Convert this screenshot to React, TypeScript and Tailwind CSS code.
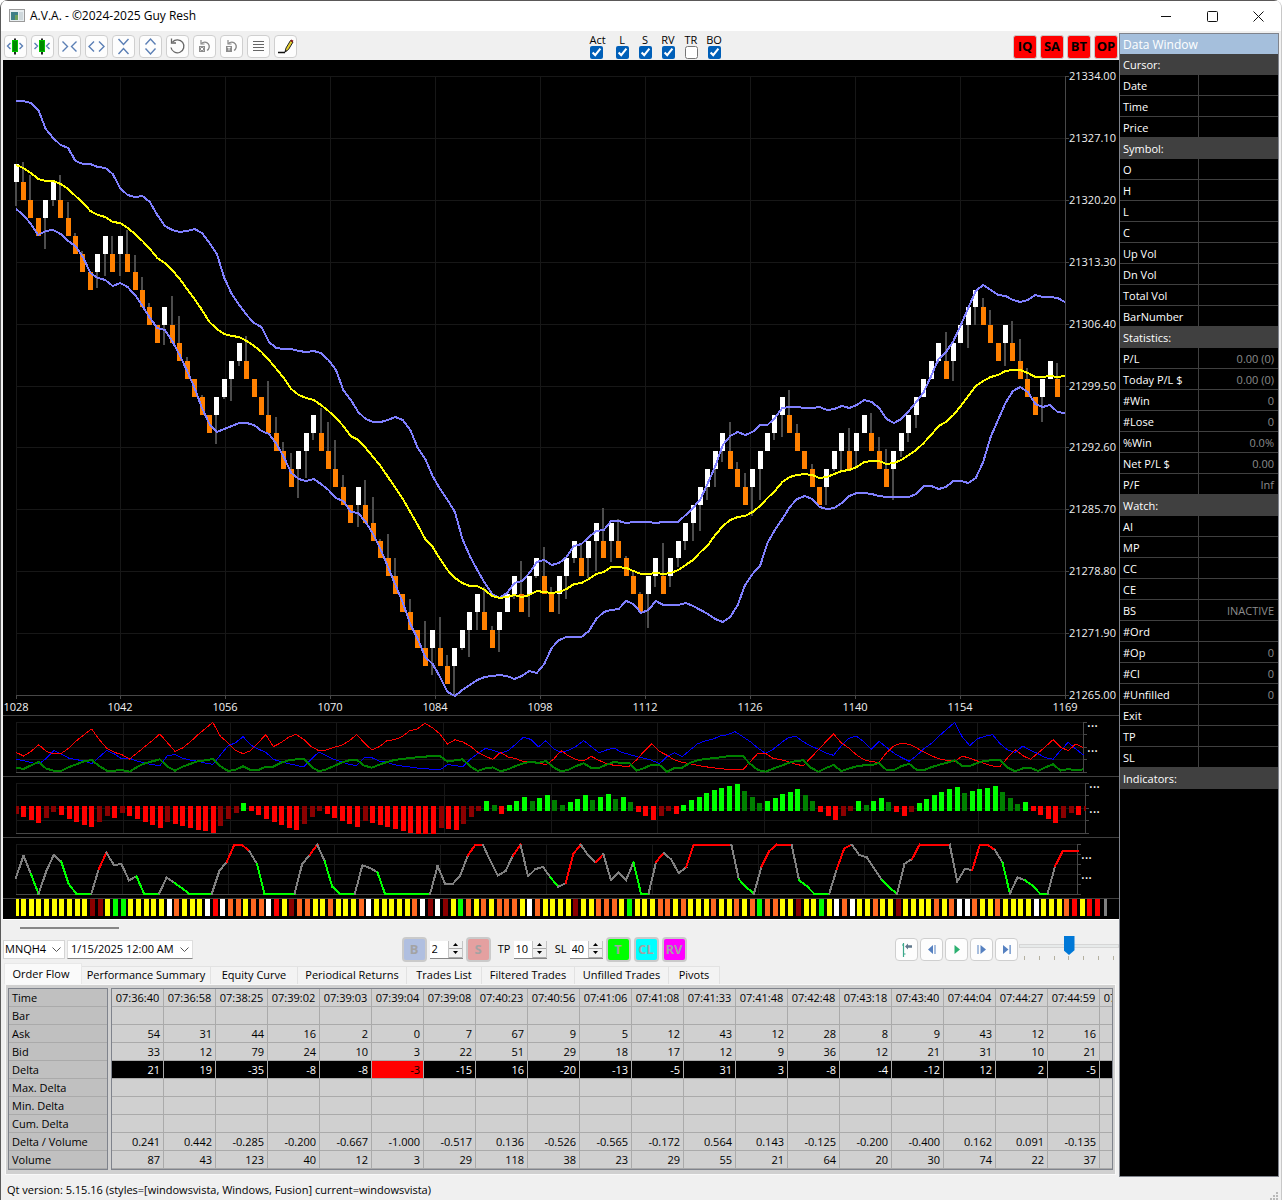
import React from 'react';

// One token per bar: direction (U/D) and wick length in px.
const BARS = `
U24 D20 D25 D0 U31 U6 D25 D16 D3 D3 D0 U16 U22 D18 U22 D24 D17 D13 D4 D0
U20 D29 D27 D4 D0 D2 D0 U29 U2 U22 U5 D25 D0 D0 D34 D16 D9 D16 U29 U27
U7 D25 D29 D29 D12 D0 U22 D25 D26 D2 D24 D18 D0 D13 D0 D27 U27 D31 D11 U29
U2 U27 U18 D25 D4 U22 U0 U5 D33 U23 U2 D29 D7 U20 U23 U5 D14 U20 U30 D33
U21 D22 D2 D5 D2 U34 U11 D33 U11 U9 U9 U18 U26 U13 U18 U11 D29 D7 D14 U29
U31 U0 U7 U22 D25 D9 D0 D5 D0 U18 U2 U19 D23 U15 U0 D20 D14 D20 U31 U6
U9 U13 U0 U0 U2 D29 U20 U0 U23 U18 D9 D15 D0 U23 D22 D22 D11 D0 U25 U0 D16`
    .trim()
    .split(/\s+/);

const UPPER = [
    101, 101, 103, 110, 129, 138, 145, 148, 161, 164,
    164, 167, 168, 174, 188, 195, 197, 196, 202, 215,
    226, 230, 232, 231, 229, 233, 243, 254, 278, 294,
    305, 315, 323, 327, 342, 348, 349, 349, 351, 352,
    351, 353, 360, 370, 390, 400, 412, 419, 422, 422,
    420, 417, 420, 430, 448, 459, 476, 489, 500, 512,
    539, 556, 570, 583, 594, 598, 593, 583, 581, 573,
    562, 560, 565, 563, 557, 546, 544, 537, 531, 530,
    521, 521, 523, 522, 522, 522, 523, 522, 522, 522,
    515, 508, 499, 483, 466, 445, 436, 432, 435, 432,
    425, 425, 418, 408, 407, 407, 408, 408, 407, 410,
    409, 406, 408, 405, 400, 402, 408, 419, 423, 419,
    411, 402, 392, 376, 359, 352, 341, 325, 308, 291,
    285, 290, 295, 296, 300, 302, 300, 295, 297, 297,
    298, 302,
];

const MIDDLE = [
    165, 168, 173, 179, 181, 181, 184, 189, 196, 203,
    211, 215, 217, 222, 223, 228, 234, 241, 249, 258,
    263, 270, 279, 289, 299, 310, 322, 329, 334, 336,
    337, 341, 346, 352, 360, 369, 378, 389, 395, 398,
    400, 405, 411, 418, 426, 436, 440, 448, 457, 466,
    477, 488, 499, 512, 525, 539, 547, 559, 570, 578,
    583, 586, 586, 590, 596, 598, 597, 595, 597, 595,
    591, 592, 593, 592, 589, 584, 583, 579, 574, 572,
    567, 567, 568, 571, 574, 574, 573, 574, 573, 570,
    565, 560, 552, 545, 535, 526, 520, 517, 516, 512,
    506, 498, 491, 482, 477, 475, 474, 475, 478, 477,
    474, 471, 470, 467, 462, 461, 461, 464, 463, 460,
    455, 450, 443, 435, 426, 422, 415, 406, 396, 386,
    381, 377, 375, 371, 370, 370, 373, 377, 377, 376,
    377, 376,
];

const LOWER = [
    209, 215, 224, 235, 231, 230, 234, 241, 246, 257,
    273, 278, 280, 286, 283, 287, 295, 306, 318, 328,
    330, 341, 355, 371, 388, 408, 424, 432, 429, 426,
    423, 423, 425, 431, 434, 444, 457, 473, 479, 481,
    479, 484, 490, 498, 501, 512, 513, 522, 534, 549,
    567, 585, 603, 624, 639, 657, 664, 677, 692, 696,
    690, 685, 680, 677, 676, 675, 676, 679, 676, 671,
    673, 664, 648, 640, 637, 637, 637, 631, 619, 612,
    610, 609, 601, 604, 613, 610, 601, 605, 605, 605,
    603, 606, 610, 614, 619, 622, 617, 605, 585, 574,
    566, 543, 530, 519, 507, 499, 496, 499, 507, 509,
    508, 503, 496, 493, 493, 494, 496, 497, 497, 497,
    497, 494, 486, 486, 489, 487, 481, 481, 483, 478,
    462, 437, 420, 403, 391, 387, 392, 404, 407, 405,
    412, 413,
];

// Oscillator series are stored in thirds of a pixel, measured from y = 690.
const DI_MINUS = [
    187, 198, 184, 164, 184, 192, 190, 174, 152, 134,
    117, 149, 175, 187, 194, 207, 189, 170, 152, 132,
    158, 184, 174, 156, 135, 116, 97, 139, 158, 181,
    191, 182, 158, 134, 170, 158, 142, 133, 148, 170,
    182, 180, 172, 166, 153, 134, 158, 180, 170, 152,
    149, 140, 122, 117, 100, 113, 132, 162, 149, 156,
    168, 187, 199, 208, 187, 201, 206, 214, 217, 219,
    224, 208, 182, 198, 209, 213, 199, 211, 221, 226,
    228, 229, 209, 183, 161, 184, 196, 210, 217, 221,
    226, 230, 233, 236, 238, 239, 240, 215, 190, 190,
    205, 209, 215, 223, 227, 203, 179, 155, 132, 158,
    174, 194, 209, 215, 217, 188, 167, 159, 163, 174,
    187, 198, 207, 211, 215, 198, 205, 213, 221, 228,
    229, 203, 179, 197, 208, 189, 170, 149, 172, 182,
    162, 173,
];

const DI_PLUS = [
    208, 212, 218, 222, 205, 182, 192, 205, 209, 213,
    221, 201, 181, 192, 207, 205, 213, 219, 224, 227,
    197, 194, 205, 210, 214, 219, 223, 195, 168, 158,
    140, 165, 177, 187, 208, 215, 221, 226, 231, 208,
    186, 197, 208, 216, 223, 227, 203, 203, 213, 217,
    224, 228, 231, 234, 236, 238, 240, 224, 226, 231,
    208, 191, 175, 181, 189, 182, 163, 142, 148, 171,
    152, 176, 187, 181, 169, 152, 170, 188, 180, 174,
    187, 193, 200, 205, 211, 221, 200, 188, 200, 181,
    162, 153, 148, 138, 134, 125, 140, 155, 174, 190,
    178, 160, 143, 139, 155, 168, 178, 189, 196, 168,
    145, 138, 155, 178, 154, 172, 190, 203, 214, 196,
    175, 159, 137, 117, 97, 141, 167, 146, 139, 134,
    161, 180, 187, 168, 181, 191, 203, 208, 181, 157,
    177, 195,
];

const ADX = [
    233, 237, 226, 216, 236, 242, 242, 231, 223, 214,
    210, 228, 242, 242, 240, 245, 231, 220, 214, 208,
    230, 242, 230, 222, 214, 211, 207, 228, 243, 239,
    229, 240, 240, 230, 230, 218, 211, 208, 206, 230,
    244, 238, 228, 218, 211, 209, 227, 233, 224, 216,
    210, 207, 204, 202, 200, 198, 198, 215, 211, 208,
    229, 243, 235, 232, 244, 238, 228, 220, 215, 219,
    213, 232, 244, 239, 228, 220, 234, 234, 224, 216,
    219, 218, 242, 234, 224, 225, 245, 234, 233, 219,
    211, 207, 205, 202, 199, 198, 198, 222, 240, 245,
    236, 228, 219, 213, 211, 233, 245, 234, 225, 243,
    236, 229, 226, 226, 219, 240, 240, 228, 222, 240,
    240, 231, 224, 218, 211, 228, 228, 219, 212, 211,
    211, 233, 244, 235, 233, 243, 232, 223, 242, 237,
    241, 238,
];

const HISTOGRAM = [
    372, 381, 390, 399, 384, 366, 375, 387, 396, 405,
    411, 396, 378, 384, 369, 378, 387, 396, 405, 414,
    396, 402, 408, 414, 420, 423, 429, 408, 387, 369,
    339, 363, 375, 387, 396, 405, 414, 420, 402, 381,
    363, 372, 384, 393, 402, 411, 393, 399, 405, 411,
    417, 423, 429, 432, 432, 432, 414, 417, 420, 402,
    381, 363, 333, 345, 372, 345, 333, 321, 333, 324,
    315, 330, 345, 336, 327, 315, 330, 321, 312, 327,
    321, 336, 366, 378, 390, 378, 363, 372, 345, 330,
    321, 309, 300, 294, 288, 282, 303, 321, 339, 333,
    324, 312, 306, 297, 315, 333, 366, 378, 390, 378,
    363, 333, 345, 333, 324, 336, 366, 378, 366, 339,
    327, 315, 306, 297, 291, 309, 303, 297, 294, 288,
    306, 324, 342, 336, 363, 375, 387, 399, 384, 369,
    375, 363,
];

// Letter is the colour of the segment that starts at the point.
const STOCHASTIC = `
g563 g497 L553 g612 g545 g495 L515 L582 L611 L611
g611 R537 g488 g525 g522 g571 L559 L611 L611 g611
g563 L578 L594 L611 L611 L611 g611 g543 R515 R464
R464 g484 L522 L611 L611 L611 L611 g611 g522 R495
g464 L514 L590 L611 L611 g611 g526 g534 L547 L611
L611 L611 L611 L611 L611 g611 g528 g582 g582 g556
R497 R464 g464 g513 g557 g543 R497 g464 g559 g537
g531 L563 g590 R580 R492 g464 g497 R517 g492 g570
g547 g571 L517 L611 g611 R516 g489 g508 g549 R532
R464 R464 R464 R464 R464 g464 L568 L592 g611 R530
R484 R464 R464 g464 L571 L588 L611 L611 g611 R537
R475 g464 g495 g502 g537 L571 L593 g611 g521 R507
R464 R464 R464 R464 g464 g575 g537 R540 R464 R464
g480 L517 g611 g562 L571 L587 L611 g611 R528 R484
R482 R482`
    .trim()
    .split(/\s+/);

const STRIP =
    'YYYYYYYYYYDDYGGYYYYYWOYYYWRWOOYOOWRYDOOYYOYYYOWYYY' +
    'YYOWDWDYGOYOYOOOYWOYYYYDYYOOOYGYYYOOYOYYYOYYOYOGOO' +
    'YYDYYGYWOWYYOYYDYYYYOYOWWOYYOYYYYWYYYORYRR';

const STRIP_COLORS: Record<string, string> = {
    Y: '#ffff00',
    D: '#8b0000',
    G: '#00ff00',
    W: '#ffffff',
    O: '#ff6820',
    R: '#ff0000',
};

const SEGMENT_COLORS: Record<string, string> = { g: '#808080', L: '#00ff00', R: '#ff0000' };

const PRICES = ['21334.00', '21327.10', '21320.20', '21313.30', '21306.40', '21299.50', '21292.60', '21285.70', '21278.80', '21271.90', '21265.00'];
const BAR_NUMBERS = ['1028', '1042', '1056', '1070', '1084', '1098', '1112', '1126', '1140', '1154', '1169'];

const GRID = '#171717';
const AXIS = '#484848';

const toPoints = (values: number[], step: number) =>
    values.map((v, i) => `${16 + i * step},${v}`).join(' ');

const oscPoints = (values: number[]) =>
    values.map((v, i) => `${16 + i * 7.57},${690 + v / 3}`).join(' ');

const PriceChart: React.FC = () => {
    let level = -1;
    const candles = BARS.map((token) => {
        const up = token[0] === 'U';
        level += up ? -1 : 1;
        return { up, level, wick: Number(token.slice(1)) };
    });
    // the first bar sits on level 0
    const shift = -candles[0].level;

    return (
        <svg viewBox="3 60 1116 655" className="block w-full" role="img" aria-label="Price chart">
            <g shapeRendering="crispEdges">
                {PRICES.map((p, i) => {
                    const y = Math.round(76 + i * 61.9);
                    return (
                        <g key={p}>
                            <rect x={16} y={y} width={1049} height={1} fill={i === 10 ? AXIS : GRID} />
                            <rect x={1065} y={y} width={4} height={1} fill={AXIS} />
                        </g>
                    );
                })}
                {BAR_NUMBERS.map((n, i) => {
                    const x = i === 0 ? 16 : 15 + i * 105;
                    return (
                        <g key={n}>
                            <rect x={x} y={76} width={1} height={619} fill={i === 10 ? AXIS : GRID} />
                            <rect x={x} y={695} width={1} height={4} fill={AXIS} />
                        </g>
                    );
                })}
                {candles.map((c, i) => {
                    const x = Math.floor(16 + i * 7.44);
                    const top = Math.round(164 + (c.level + shift) * 17.93);
                    const bottom = Math.round(164 + (c.level + shift + 1) * 17.93);
                    return (
                        <g key={i}>
                            <rect x={x - 1} y={c.up ? bottom : top - c.wick} width={2} height={c.wick} fill="#4c4c4c" />
                            <rect x={x - 2} y={top} width={5} height={bottom - top} fill={c.up ? '#ffffff' : '#ff8000'} />
                        </g>
                    );
                })}
                <polyline points={toPoints(UPPER, 7.44)} fill="none" stroke="#8080ff" strokeWidth={2} />
                <polyline points={toPoints(LOWER, 7.44)} fill="none" stroke="#8080ff" strokeWidth={2} />
                <polyline points={toPoints(MIDDLE, 7.44)} fill="none" stroke="#ffff00" strokeWidth={2} />
            </g>
            <g fill="#f0f0f0" fontSize={11}>
                {PRICES.map((p, i) => (
                    <text key={p} x={1069} y={Math.round(80 + i * 61.9)}>{p}</text>
                ))}
                {BAR_NUMBERS.map((n, i) => (
                    <text key={n} x={i === 0 ? 16 : 15 + i * 105} y={711} textAnchor="middle">{n}</text>
                ))}
            </g>
        </svg>
    );
};

interface PanelGridProps {
    top: number;
    lines: number[];
    step: number;
    right: number;
    dots: number[];
}

const PanelGrid: React.FC<PanelGridProps> = ({ top, lines, step, right, dots }) => (
    <>
        <g shapeRendering="crispEdges">
            {lines.map((y, i) => (
                <g key={y}>
                    <rect x={16} y={top + y} width={right - 16} height={1} fill={i === lines.length - 1 ? AXIS : GRID} />
                    <rect x={right} y={top + y} width={4} height={1} fill={AXIS} />
                </g>
            ))}
            {Array.from({ length: 10 }, (_, i) => (
                <rect key={i} x={Math.round(16 + i * step)} y={top} width={1} height={50} fill={GRID} />
            ))}
            <rect x={right} y={top} width={1} height={50} fill={AXIS} />
        </g>
        <g fill="#ffffff" fontSize={14}>
            {dots.map((y) => (
                <text key={y} x={right + 4} y={y}>...</text>
            ))}
        </g>
    </>
);

const DirectionalPanel: React.FC = () => (
    <svg viewBox="3 716 1116 60" className="block w-full overflow-visible" role="img" aria-label="Directional movement">
        <PanelGrid top={722} lines={[0, 12, 25, 37, 50]} step={106.8} right={1083} dots={[727, 752]} />
        <g fill="none" shapeRendering="crispEdges">
            <polyline points={oscPoints(DI_PLUS)} stroke="#0000ff" />
            <polyline points={oscPoints(DI_MINUS)} stroke="#ff0000" />
            <polyline points={oscPoints(ADX)} stroke="#008000" strokeWidth={2} />
        </g>
    </svg>
);

const HistogramPanel: React.FC = () => (
    <svg viewBox="3 777 1116 60" className="block w-full overflow-visible" role="img" aria-label="Momentum histogram">
        <PanelGrid top={783} lines={[0, 12, 25, 37, 50]} step={106.9} right={1085} dots={[788, 813]} />
        <g shapeRendering="crispEdges">
            {HISTOGRAM.map((v, i) => {
                const prev = HISTOGRAM[i - 1] ?? v + 1;
                const red = v > 355;
                const growing = red ? prev <= v || prev < 355 : prev >= v;
                const x = Math.max(16, Math.round(13.5 + i * 7.59));
                const width = i === 0 ? 3 : i === 141 ? 2 : 5;
                const fill = red ? (growing ? '#ff0000' : '#8b0000') : growing ? '#00ff00' : '#008000';
                const y = Math.round(690 + v / 3);
                return red ? (
                    <rect key={i} x={x} y={806} width={width} height={y - 806} fill={fill} />
                ) : (
                    <rect key={i} x={x} y={y} width={width} height={811 - y} fill={fill} />
                );
            })}
        </g>
    </svg>
);

const StochasticPanel: React.FC = () => (
    <svg viewBox="3 838 1116 60" className="block w-full overflow-visible" role="img" aria-label="Stochastic">
        <PanelGrid top={844} lines={[0, 10, 20, 30, 40, 50]} step={106} right={1077} dots={[859, 879]} />
        <g shapeRendering="crispEdges" strokeWidth={2} strokeLinecap="square">
            {STOCHASTIC.slice(0, -1).map((token, i) => (
                <line
                    key={i}
                    x1={16 + i * 7.53}
                    y1={690 + Number(token.slice(1)) / 3}
                    x2={16 + (i + 1) * 7.53}
                    y2={690 + Number(STOCHASTIC[i + 1].slice(1)) / 3}
                    stroke={SEGMENT_COLORS[token[0]]}
                />
            ))}
        </g>
    </svg>
);

const StripPanel: React.FC = () => (
    <svg viewBox="3 899 1116 20" className="block w-full" role="img" aria-label="Signal strip">
        <g shapeRendering="crispEdges">
            {STRIP.split('').map((c, i) => (
                <rect
                    key={i}
                    x={i === 0 ? 16 : Math.round(13.3 + i * 7.672)}
                    y={899}
                    width={i === 0 ? 3 : 5}
                    height={17}
                    fill={STRIP_COLORS[c]}
                />
            ))}
            <rect x={1104} y={899} width={3} height={17} fill="#808080" />
        </g>
    </svg>
);

const blue = { fill: 'none', stroke: '#5b7fb5', strokeWidth: 1.4 };

const CandleGlyph = () => (
    <>
        <path d="M9 1.500v16" stroke="#222" strokeWidth="2" />
        <rect x="6.500" y="3.500" width="5" height="11" fill="#008a00" stroke="#00c400" />
    </>
);

const TOOLS: { label: string; icon: React.ReactNode }[] = [
    { label: 'Widen bars', icon: <><path d="M4.500 6 1.500 9l3 3M13.500 6l3 3-3 3" {...blue} /><CandleGlyph /></> },
    { label: 'Narrow bars', icon: <><path d="M1.500 6l3 3-3 3M16.500 6l-3 3 3 3" {...blue} /><CandleGlyph /></> },
    { label: 'Compress horizontally', icon: <path d="M2.500 4.500 7.500 9.500l-5 5M16.500 4.500l-5 5 5 5" {...blue} /> },
    { label: 'Expand horizontally', icon: <path d="M7 4.500 2 9.500l5 5M12 4.500l5 5-5 5" {...blue} /> },
    { label: 'Compress vertically', icon: <path d="M4.500 2 9.500 7.500l5-5.500M4.500 17l5-5.500 5 5.500" {...blue} /> },
    { label: 'Expand vertically', icon: <path d="M4.500 7.500 9.500 2l5 5.500M4.500 11.500l5 5.500 5-5.500" {...blue} /> },
    {
        label: 'Reset view',
        icon: (
            <>
                <path d="M4.500 5a6.500 6.500 0 1 1-1.500 5.500" fill="none" stroke="#666" strokeWidth="1.3" />
                <path d="M3.500 1.500V6H8" fill="none" stroke="#666" strokeWidth="1.3" />
            </>
        ),
    },
    ...['x', 'y'].map((axis) => ({
        label: `Reset and lock ${axis}`,
        icon: (
            <>
                <path d="M6.500 6.500a4.500 4.500 0 1 1 5.500 7" fill="none" stroke="#888" strokeWidth="1.4" />
                <path d="M6 3v4h3.500" fill="none" stroke="#888" strokeWidth="1.200" />
                <rect x="4" y="9" width="6" height="6" fill="#8c8c8c" />
                <path d={axis === 'x' ? 'M5.500 10.500l3 3M8.500 10.500l-3 3' : 'M5.500 10.500h3M7 10.500v3'} stroke="#fff" strokeWidth="1" />
            </>
        ),
    })),
    {
        label: 'List',
        icon: <path d="M4 4.500h11M4 7.500h11M4 10.500h11M4 13.500h11" stroke="#666" strokeWidth="1.200" />,
    },
    {
        label: 'Draw',
        icon: (
            <>
                <path d="M2 15.500h7" stroke="#111" strokeWidth="1.500" />
                <path d="M9 15l1-4 4.500-7.500 2.500 1.500L12.500 12.500z" fill="#e6cf2e" stroke="#222" />
                <path d="M14.300 4l1-1.500 2.200 1.300-1 1.500z" fill="#8b1a1a" />
                <path d="M9 15.200l.6-2.200 1.200 1z" fill="#111" />
            </>
        ),
    },
];

const TOGGLES = [
    { label: 'Act', on: true },
    { label: 'L', on: true },
    { label: 'S', on: true },
    { label: 'RV', on: true },
    { label: 'TR', on: false },
    { label: 'BO', on: true },
];

const Toolbar: React.FC = () => (
    <div className="flex h-[29px] items-start justify-between bg-[#f0f0f0] pl-px pr-px pt-1">
        <div className="flex gap-1">
            {TOOLS.map((tool) => (
                <button
                    key={tool.label}
                    type="button"
                    aria-label={tool.label}
                    className="flex size-[23px] items-center justify-center rounded-[4px] border border-[#cfcfcf] bg-[#fdfdfd]"
                >
                    <svg viewBox="0 0 19 19" className="size-[19px] shrink-0">{tool.icon}</svg>
                </button>
            ))}
        </div>
        <div className="flex gap-[10px]">
            {TOGGLES.map((t) => (
                <label key={t.label} className="flex min-w-[13px] flex-col items-start gap-[2px] leading-[9px]">
                    <span className={t.label === 'Act' ? 'w-4' : 'flex w-[13px] justify-center'}>{t.label}</span>
                    <input type="checkbox" defaultChecked={t.on} className="size-[13px] accent-[#005fb8]" />
                </label>
            ))}
        </div>
        <div className="flex gap-[3px]">
            {['IQ', 'SA', 'BT', 'OP'].map((name) => (
                <button
                    key={name}
                    type="button"
                    className="flex size-6 items-center justify-center rounded-[3px] border border-[#c8c8c8] bg-[#ff0000] text-[13px] font-bold"
                >
                    {name}
                </button>
            ))}
        </div>
    </div>
);

const DATA_ROWS: [string, string?][] = [
    ['Cursor:'], ['Date', ''], ['Time', ''], ['Price', ''],
    ['Symbol:'], ['O', ''], ['H', ''], ['L', ''], ['C', ''], ['Up Vol', ''], ['Dn Vol', ''], ['Total Vol', ''], ['BarNumber', ''],
    ['Statistics:'], ['P/L', '0.00 (0)'], ['Today P/L $', '0.00 (0)'], ['#Win', '0'], ['#Lose', '0'], ['%Win', '0.0%'], ['Net P/L $', '0.00'], ['P/F', 'Inf'],
    ['Watch:'], ['AI', ''], ['MP', ''], ['CC', ''], ['CE', ''], ['BS', 'INACTIVE'], ['#Ord', ''], ['#Op', '0'], ['#Cl', '0'], ['#Unfilled', '0'], ['Exit', ''], ['TP', ''], ['SL', ''],
    ['Indicators:'],
];

const DataWindow: React.FC = () => (
    <aside className="mt-[2px] w-40 shrink-0 border border-[#7f838c] bg-black text-white">
        <h2 className="h-5 bg-[#a5bfdc] pl-[3px] text-[12px] leading-[22px]">Data Window</h2>
        <table className="w-full table-fixed border-separate border-spacing-0">
            <colgroup>
                <col className="w-[79px]" />
                <col />
            </colgroup>
            <tbody>
                {DATA_ROWS.map(([name, value]) =>
                    value === undefined ? (
                        <tr key={name}>
                            <th colSpan={2} className="h-[21px] bg-[#404040] p-0 pl-[3px] pt-px text-left font-normal leading-5">{name}</th>
                        </tr>
                    ) : (
                        <tr key={name}>
                            <th className="h-[21px] border-b border-r border-[#404040] p-0 pl-[3px] pt-[2px] text-left font-normal leading-[18px]">{name}</th>
                            <td className="h-[21px] border-b border-[#404040] p-0 pr-1 pt-[2px] text-right leading-[18px] text-[#8c8c8c]">{value}</td>
                        </tr>
                    ),
                )}
            </tbody>
        </table>
    </aside>
);

const Chevron = () => (
    <svg viewBox="0 0 9 5" className="pointer-events-none absolute right-1 top-[7px] h-[5px] w-[9px]">
        <path d="M.5.5l4 4 4-4" fill="none" stroke="#555" />
    </svg>
);

const Stepper: React.FC<{ label: string; value: string }> = ({ label, value }) => (
    <div className="flex h-[18px] w-[33px] border-b border-[#868686] bg-white">
        <input aria-label={label} defaultValue={value} className="w-[18px] min-w-0 bg-transparent pl-[2px] outline-none" />
        <div className="flex w-[15px] flex-col border-l border-r border-[#c4c4c4] bg-[#f0f0f0]">
            {['up', 'down'].map((dir) => (
                <button key={dir} type="button" aria-label={`${label} ${dir}`} className="flex flex-1 items-center justify-center border-b border-[#aaa]">
                    <svg viewBox="0 0 5 3" className="h-[3px] w-[5px]">
                        <path d={dir === 'up' ? 'M0 3l2.500-3L5 3z' : 'M0 0l2.500 3L5 0z'} />
                    </svg>
                </button>
            ))}
        </div>
    </div>
);

const ORDER_BUTTON = 'flex size-[25px] items-center justify-center rounded-[4px] border-2 border-[#cacaca] text-[13px] font-bold text-[#a3a3a3]';

const PLAYBACK: { label: string; icon: React.ReactNode }[] = [
    {
        label: 'Go to bar',
        icon: (
            <>
                <path d="M6.500 3v14M6.500 5H5M6.500 14h2" stroke="#3aa88a" strokeWidth="1.200" fill="none" />
                <path d="M8 6.500l3-3v1.800h4v2.400h-4v1.800z" fill="#60788c" />
            </>
        ),
    },
    { label: 'Step back', icon: <path d="M11 5v9L6 9.500zM12.500 5h1v9h-1z" fill="#5580c0" /> },
    { label: 'Play', icon: <path d="M7.500 5v9L13 9.500z" fill="#2bb070" /> },
    { label: 'Step forward', icon: <path d="M8.500 5v9l5.500-4.500zM5.500 5h1v9h-1z" fill="#5580c0" /> },
    { label: 'Go to end', icon: <path d="M6 5v9l5.500-4.500zM12.500 5h1.200v9h-1.200z" fill="#5580c0" /> },
];

const Controls: React.FC = () => (
    <div className="flex h-[27px] items-start justify-between">
        <div className="flex gap-[2px] pt-1">
            <div className="relative">
                <select aria-label="Symbol" className="h-[19px] w-[62px] appearance-none border border-[#d5d5d5] bg-white pl-px">
                    <option>MNQH4</option>
                </select>
                <Chevron />
            </div>
            <div className="relative">
                <select aria-label="Start date" className="h-[19px] w-[126px] appearance-none border border-[#dedede] border-b-[#868686] bg-white pl-[3px]">
                    <option>1/15/2025 12:00 AM</option>
                </select>
                <Chevron />
            </div>
        </div>
        <div className="flex items-center gap-[3px] pt-px">
            <button type="button" className={`${ORDER_BUTTON} bg-[#b0bfe0]`}>B</button>
            <Stepper label="Quantity" value="2" />
            <button type="button" className={`${ORDER_BUTTON} bg-[#e4a0a0]`}>S</button>
            <span className="w-[17px] text-right">TP</span>
            <Stepper label="Take profit" value="10" />
            <span className="w-[17px] text-right">SL</span>
            <Stepper label="Stop loss" value="40" />
            <button type="button" className={`${ORDER_BUTTON} bg-[#00ff00]`}>T</button>
            <button type="button" className={`${ORDER_BUTTON} bg-[#00ffff]`}>CL</button>
            <button type="button" className={`${ORDER_BUTTON} bg-[#ff00ff]`}>RV</button>
        </div>
        <div className="flex">
            <div className="flex gap-[2px] pt-[2px]">
                {PLAYBACK.map((p) => (
                    <button
                        key={p.label}
                        type="button"
                        aria-label={p.label}
                        className="flex size-[23px] items-center justify-center rounded-[4px] border border-[#cfcfcf] bg-[#fdfdfd]"
                    >
                        <svg viewBox="0 0 19 19" className="size-[19px] shrink-0">{p.icon}</svg>
                    </button>
                ))}
            </div>
            <div className="ml-px w-[100px]">
                <input
                    type="range"
                    aria-label="Playback speed"
                    min={0}
                    max={6}
                    defaultValue={3}
                    className="block h-5 w-full appearance-none bg-transparent [&::-webkit-slider-runnable-track]:h-1 [&::-webkit-slider-runnable-track]:border [&::-webkit-slider-runnable-track]:border-[#d6d6d6] [&::-webkit-slider-runnable-track]:bg-[#e7eaea] [&::-webkit-slider-thumb]:-mt-[9px] [&::-webkit-slider-thumb]:h-[19px] [&::-webkit-slider-thumb]:w-[11px] [&::-webkit-slider-thumb]:appearance-none [&::-webkit-slider-thumb]:bg-[#0078d7] [&::-webkit-slider-thumb]:[clip-path:polygon(0_0,100%_0,100%_75%,50%_100%,0_75%)]"
                />
                <div className="flex justify-between px-[5px]">
                    {[0, 1, 2, 3, 4, 5, 6].map((n) => (
                        <span key={n} className="h-1 w-px bg-[#b4b0a0]" />
                    ))}
                </div>
            </div>
        </div>
    </div>
);

const TABS = [
    { name: 'Performance Summary', width: 'w-[129px]' },
    { name: 'Equity Curve', width: 'w-[87px]' },
    { name: 'Periodical Returns', width: 'w-[109px]' },
    { name: 'Trades List', width: 'w-[75px]' },
    { name: 'Filtered Trades', width: 'w-[93px]' },
    { name: 'Unfilled Trades', width: 'w-[94px]' },
    { name: 'Pivots', width: 'w-[51px]' },
];

const FLOW = [
    ['07:36:40', '54', '33', '21', '0.241', '87'],
    ['07:36:58', '31', '12', '19', '0.442', '43'],
    ['07:38:25', '44', '79', '-35', '-0.285', '123'],
    ['07:39:02', '16', '24', '-8', '-0.200', '40'],
    ['07:39:03', '2', '10', '-8', '-0.667', '12'],
    ['07:39:04', '0', '3', '-3', '-1.000', '3'],
    ['07:39:08', '7', '22', '-15', '-0.517', '29'],
    ['07:40:23', '67', '51', '16', '0.136', '118'],
    ['07:40:56', '9', '29', '-20', '-0.526', '38'],
    ['07:41:06', '5', '18', '-13', '-0.565', '23'],
    ['07:41:08', '12', '17', '-5', '-0.172', '29'],
    ['07:41:33', '43', '12', '31', '0.564', '55'],
    ['07:41:48', '12', '9', '3', '0.143', '21'],
    ['07:42:48', '28', '36', '-8', '-0.125', '64'],
    ['07:43:18', '8', '12', '-4', '-0.200', '20'],
    ['07:43:40', '9', '21', '-12', '-0.400', '30'],
    ['07:44:04', '43', '31', '12', '0.162', '74'],
    ['07:44:27', '12', '10', '2', '0.091', '22'],
    ['07:44:59', '16', '21', '-5', '-0.135', '37'],
    ['07:45:02', '', '', '', '', ''],
];

// Row name and the FLOW column it reads, -1 for rows without data.
const FLOW_ROWS: [string, number][] = [
    ['Time', 0],
    ['Bar', -1],
    ['Ask', 1],
    ['Bid', 2],
    ['Delta', 3],
    ['Max. Delta', -1],
    ['Min. Delta', -1],
    ['Cum. Delta', -1],
    ['Delta / Volume', 4],
    ['Volume', 5],
];

const cellTone = (row: string, value: string) => {
    if (row === 'Time') return 'text-center';
    if (row !== 'Delta') return 'pr-[3px] text-right';
    return value === '-3' ? 'bg-[#ff0000] pr-[3px] text-right' : 'bg-black pr-[3px] text-right text-white';
};

const OrderFlow: React.FC = () => (
    <section className="mb-[2px] ml-[2px] mr-[3px] flex gap-[3px] border border-[#f8f8f8] bg-[#d0d0d0] px-[2px] pb-1 pt-[3px]">
        <div className="w-[100px] shrink-0 border border-[#7f838c]">
            <table className="w-full border-separate border-spacing-0 bg-[#c0c0c0]">
                <tbody>
                    {FLOW_ROWS.map(([name]) => (
                        <tr key={name}>
                            <th className="h-[18px] border-b border-[#aaaaaa] p-0 pl-[3px] text-left font-normal leading-4">{name}</th>
                        </tr>
                    ))}
                </tbody>
            </table>
        </div>
        <div className="min-w-0 flex-1 overflow-hidden border border-[#7f838c]">
            <table className="w-[1040px] table-fixed border-separate border-spacing-0">
                <tbody>
                    {FLOW_ROWS.map(([name, col]) => (
                        <tr key={name}>
                            {FLOW.map((f) => (
                                <td
                                    key={f[0]}
                                    className={`h-[18px] w-[52px] border-b border-r border-[#aaaaaa] p-0 leading-4 ${cellTone(name, f[col])}`}
                                >
                                    {col < 0 ? '' : f[col]}
                                </td>
                            ))}
                        </tr>
                    ))}
                </tbody>
            </table>
        </div>
    </section>
);

const TitleBar: React.FC = () => (
    <header className="flex h-[31px] items-center justify-between border-t border-[#5a5858] bg-white pl-2 pr-[17px]">
        <div className="flex items-center gap-[5px]">
            <svg viewBox="0 0 16 14" className="h-[14px] w-4">
                <rect x=".5" y=".5" width="15" height="12" fill="#e8eef0" stroke="#9a9a9a" />
                <rect x="2" y="3" width="7" height="8" fill="#3f7f86" />
                <rect x="6" y="6" width="3" height="5" fill="#6fa05a" />
                <rect x="10" y="3" width="4" height="8" fill="#cfd8dc" />
            </svg>
            <h1 className="text-[12px]">A.V.A. - ©2024-2025 Guy Resh</h1>
        </div>
        <div className="flex gap-[35px]">
            {[
                ['Minimize', 'M0 5.500h10'],
                ['Maximize', 'M1.500.5h8a1 1 0 0 1 1 1v8a1 1 0 0 1-1 1h-8a1 1 0 0 1-1-1v-8a1 1 0 0 1 1-1z'],
                ['Close', 'M.5.5l10 10M10.500.5l-10 10'],
            ].map(([label, d]) => (
                <button key={label} type="button" aria-label={label}>
                    <svg viewBox="0 0 11 11" className="size-[11px]">
                        <path d={d} fill="none" stroke="#111" />
                    </svg>
                </button>
            ))}
        </div>
    </header>
);

const App: React.FC = () => {
    return (
        <div className="flex min-h-screen flex-col overflow-hidden rounded-t-lg border-l border-r border-l-[#5a5a5a] border-r-[#c8c8c8] bg-[#f0f0f0] font-['Open_Sans','Noto_Sans',sans-serif] text-[11px] text-black">
            <TitleBar />
            <div className="flex pl-[2px] pr-[2px]">
                <main className="flex min-w-0 flex-1 flex-col">
                    <Toolbar />
                    <div className="bg-black">
                        <div className="border-b border-[#404040]"><PriceChart /></div>
                        <div className="border-b border-[#404040]"><DirectionalPanel /></div>
                        <div className="border-b border-[#404040]"><HistogramPanel /></div>
                        <div className="border-b border-[#404040]"><StochasticPanel /></div>
                        <StripPanel />
                    </div>
                    <div className="h-[17px] border-t border-white pl-[17px] pt-[7px]">
                        <div className="h-[2px] w-[99px] bg-[#868686]" />
                    </div>
                    <Controls />
                    <div className="flex h-[21px] items-end pl-px">
                        <button type="button" className="h-[21px] w-[78px] border border-b-0 border-[#e8e8e8] bg-[#fafafa] pr-1">Order Flow</button>
                        {TABS.map((tab) => (
                            <button
                                key={tab.name}
                                type="button"
                                className={`h-[18px] whitespace-nowrap border-r border-t border-[#e2e2e2] bg-[#f3f3f3] ${tab.width}`}
                            >
                                {tab.name}
                            </button>
                        ))}
                    </div>
                    <OrderFlow />
                </main>
                <DataWindow />
            </div>
            <footer className="flex flex-1 items-center justify-between pl-[6px] pr-[3px] pt-[3px]">
                <span>Qt version: 5.15.16 (styles=[windowsvista, Windows, Fusion] current=windowsvista)</span>
                <svg viewBox="0 0 8 8" className="size-2 self-end">
                    <path d="M6 0h2v2H6zM3 3h2v2H3zM6 3h2v2H6zM0 6h2v2H0zM3 6h2v2H3zM6 6h2v2H6z" fill="#b8b8b8" />
                </svg>
            </footer>
        </div>
    );
};

export default App;
